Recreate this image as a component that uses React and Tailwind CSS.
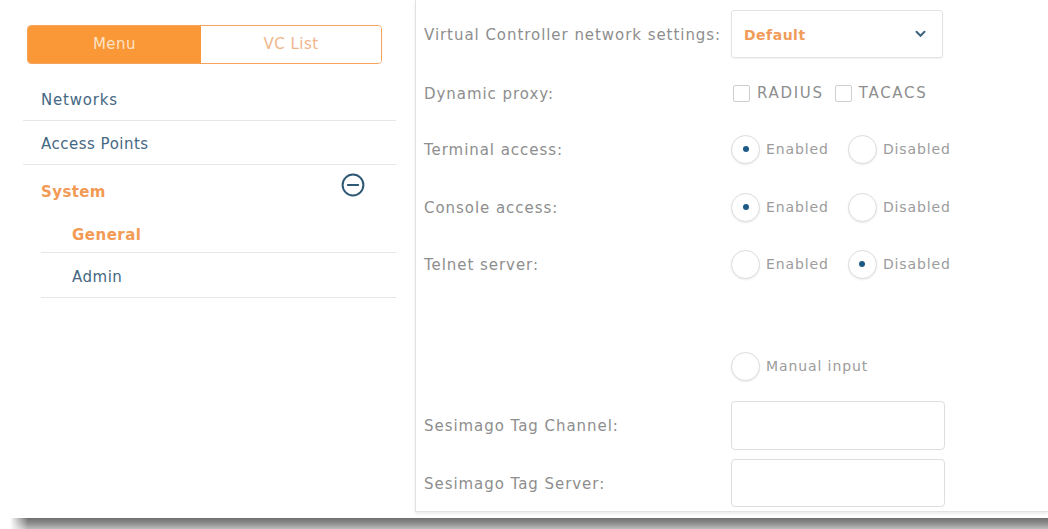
import React from "react";

const font = { fontFamily: '"DejaVu Sans", Verdana, sans-serif' };

function Radio({ checked, label }) {
  return (
    <div className="flex items-center">
      <span className="flex h-[29px] w-[29px] items-center justify-center rounded-full border border-[#dcdcdc] bg-white shadow-[0_1px_2px_rgba(0,0,0,0.08)]">
        {checked && <span className="h-[6px] w-[6px] rounded-full bg-[#1d5a85]" />}
      </span>
      <span className="ml-[6px] text-[14px] tracking-[0.9px] text-[#9c9c9c]">{label}</span>
    </div>
  );
}

function Check({ label }) {
  return (
    <div className="flex items-center">
      <span className="h-[17px] w-[17px] rounded-[2px] border border-[#cfcfcf] bg-white" />
      <span className="ml-[7px] text-[15px] tracking-[1.7px] text-[#8e8e8e]">{label}</span>
    </div>
  );
}

function Row({ label, className, children }) {
  return (
    <div className={`flex items-center ${className}`}>
      <div className="w-[307px] pt-[2px] text-[15px] tracking-[0.95px] text-[#8e8e8e]">{label}</div>
      {children}
    </div>
  );
}

function NavItem({ children, className }) {
  return (
    <div className={`flex items-center border-b border-[#e6e6e6] pt-[4px] ${className}`}>{children}</div>
  );
}

export default function App() {
  return (
    <div className="relative h-[529px] w-[1048px] overflow-hidden bg-white" style={font}>
      <div className="flex h-[512px]">
        {/* sidebar */}
        <div className="w-[415px] shrink-0 pt-[25px]">
          <div className="ml-[27px] flex h-[39px] w-[355px] overflow-hidden rounded-[4px] border border-[#f6a35c]">
            <div className="flex w-[173px] items-center justify-center bg-[#fa9838] text-[15px] tracking-[0.5px] text-[#fde2c6]">
              Menu
            </div>
            <div className="flex flex-1 items-center justify-center bg-white text-[15px] tracking-[0.5px] text-[#efb68b]">
              VC List
            </div>
          </div>

          <div className="ml-[23px] mt-[13px] w-[373px]">
            <NavItem className="h-[44px] pl-[18px]">
              <span className="text-[15px] tracking-[0.8px] text-[#456883]">Networks</span>
            </NavItem>
            <NavItem className="h-[44px] pl-[18px]">
              <span className="text-[15px] tracking-[0.5px] text-[#456883]">Access Points</span>
            </NavItem>
            <div className="flex h-[50px] items-center justify-between pl-[18px] pr-[31px] pt-[4px]">
              <span className="text-[15px] font-bold tracking-[0.4px] text-[#f39a55]">System</span>
              <svg width="24" height="24" viewBox="0 0 24 24" className="-mt-[14px]">
                <circle cx="12" cy="12" r="10.4" fill="none" stroke="#2d5874" strokeWidth="2" />
                <line x1="6.8" y1="12" x2="17.2" y2="12" stroke="#2d5874" strokeWidth="2" strokeLinecap="round" />
              </svg>
            </div>
            <div className="ml-[18px]">
              <NavItem className="h-[38px] pl-[31px]">
                <span className="text-[15px] font-bold tracking-[0.5px] text-[#f39a55]">General</span>
              </NavItem>
              <NavItem className="h-[45px] pl-[31px]">
                <span className="text-[15px] tracking-[0.5px] text-[#456883]">Admin</span>
              </NavItem>
            </div>
          </div>
        </div>

        {/* settings panel */}
        <div className="flex-1 border-b border-l border-[#e2e2e2] pl-[8px] pt-[10px] shadow-[0_2px_3px_rgba(0,0,0,0.08)]">
          <Row label="Virtual Controller network settings:" className="h-[48px]">
            <div className="flex h-[48px] w-[212px] items-center justify-between rounded-[3px] border border-[#e3e3e3] pl-[12px] pr-[16px] shadow-[0_1px_2px_rgba(0,0,0,0.06)]">
              <span className="pt-[2px] text-[14px] font-bold tracking-[0.5px] text-[#f19c5a]">Default</span>
              <svg width="11" height="8" viewBox="0 0 11 8">
                <path d="M1.5 1.8 L5.5 5.8 L9.5 1.8" fill="none" stroke="#3d6480" strokeWidth="2" strokeLinecap="round" />
              </svg>
            </div>
          </Row>
          <Row label="Dynamic proxy:" className="mt-[20px] h-[30px]">
            <div className="ml-[2px] flex items-center gap-[11px]">
              <Check label="RADIUS" />
              <Check label="TACACS" />
            </div>
          </Row>
          <Row label="Terminal access:" className="mt-[26px] h-[30px]">
            <div className="flex items-center gap-[19px]">
              <Radio checked label="Enabled" />
              <Radio label="Disabled" />
            </div>
          </Row>
          <Row label="Console access:" className="mt-[28px] h-[30px]">
            <div className="flex items-center gap-[19px]">
              <Radio checked label="Enabled" />
              <Radio label="Disabled" />
            </div>
          </Row>
          <Row label="Telnet server:" className="mt-[27px] h-[30px]">
            <div className="flex items-center gap-[19px]">
              <Radio label="Enabled" />
              <Radio checked label="Disabled" />
            </div>
          </Row>
          <Row label="" className="mt-[72px] h-[30px]">
            <Radio label="Manual input" />
          </Row>
          <Row label="Sesimago Tag Channel:" className="mt-[20px] h-[49px]">
            <div className="h-[49px] w-[214px] rounded-[4px] border border-[#dedede] bg-white" />
          </Row>
          <Row label="Sesimago Tag Server:" className="mt-[9px] h-[48px]">
            <div className="h-[48px] w-[214px] rounded-[4px] border border-[#dedede] bg-white" />
          </Row>
        </div>
      </div>

      {/* frame shadow along the bottom edge */}
      <div className="mt-[6px] ml-[10px] h-[11px] bg-gradient-to-b from-[#6f6f6f] via-[#8f8f8f] to-[#bdbdbd] [mask-image:linear-gradient(to_right,transparent,black_18px)]" />
    </div>
  );
}
